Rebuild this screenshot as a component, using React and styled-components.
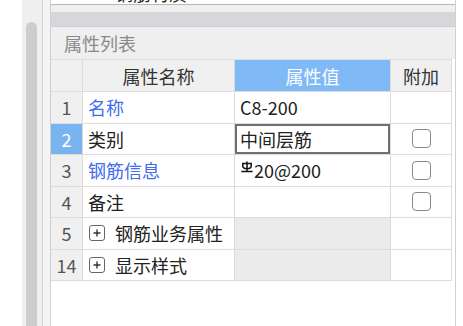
import React from "react";
import styled, { createGlobalStyle } from "styled-components";

const GlobalStyle = createGlobalStyle`
  html, body {
    margin: 0;
    padding: 0;
    background: #ffffff;
  }
  body {
    font-family: "Noto Sans CJK SC", "Noto Sans", sans-serif;
    color: #222;
  }
`;

const Page = styled.div`
  display: flex;
  width: 463px;
  height: 326px;
  overflow: hidden;
  background: #fff;
`;

const LeftBlank = styled.div`
  width: 22px;
  background: #fff;
`;

const ScrollTrack = styled.div`
  width: 21px;
  box-sizing: border-box;
  background: #efefef;
  border-right: 1px solid #d2d2d2;
  padding: 22px 0 0 4px;
  display: flex;
`;

const ScrollThumb = styled.div`
  width: 11px;
  flex: none;
  background: #cdcdcd;
  border-radius: 6px 6px 0 0;
`;

const Gutter = styled.div`
  width: 7px;
  background: #f4f4f4;
`;

const Panel = styled.div`
  width: 406px;
  box-sizing: border-box;
  border-left: 1px solid #d0d0d0;
  border-right: 1px solid #d0d0d0;
  display: flex;
  flex-direction: column;
  background: #fff;
`;

const TopBox = styled.div`
  height: 4px;
  overflow: hidden;
  background: #fff;
  border-bottom: 1px solid #b8b8b8;
  padding-left: 64px;
  font-size: 18px;
  line-height: 18px;
  color: #2a2a2a;
`;

const TopText = styled.div`
  margin-top: -16px;
`;

const Spacer = styled.div`
  height: 7px;
  background: #efefef;
`;

const GrayBar = styled.div`
  height: 14px;
  background: #d6d7da;
  border-bottom: 1px solid #cfcfcf;
`;

const SectionTitle = styled.div`
  height: 32px;
  display: flex;
  align-items: center;
  padding-left: 13px;
  background: #efefef;
  color: #8a8a8a;
  font-size: 18px;
`;

const TableArea = styled.div`
  flex: 1;
  background: #fff;
`;

const Grid = styled.div`
  display: grid;
  grid-template-columns: 32px 152px 156px 61px;
  grid-template-rows: 32px repeat(6, 31.5px);
  width: 401px;
  border-top: 1px solid #dcdcdc;
`;

const Cell = styled.div`
  box-sizing: border-box;
  border-right: 1px solid #dcdcdc;
  border-bottom: 1px solid #dcdcdc;
  display: flex;
  align-items: center;
  font-size: 18px;
  white-space: nowrap;
  overflow: hidden;
  background: ${(p) => p.$bg || "#fff"};
  color: ${(p) => p.$color || "#222"};
  justify-content: ${(p) => (p.$center ? "center" : "flex-start")};
  padding-left: ${(p) => (p.$center ? "0" : "5px")};
  box-shadow: ${(p) => (p.$editing ? "inset 0 0 0 2px #707070" : "none")};
`;

const HeadCell = styled(Cell)`
  justify-content: center;
  padding-left: 0;
`;

const NumCell = styled(Cell)`
  justify-content: center;
  padding-left: 0;
  color: ${(p) => (p.$active ? "#fff" : "#555")};
  background: ${(p) => (p.$active ? "#7ab4f0" : "#f0f0f0")};
`;

const CheckBox = styled.div`
  width: 17px;
  height: 17px;
  border: 1.5px solid #8a8a8a;
  border-radius: 4px;
  background: #fff;
`;

const PlusBox = styled.div`
  width: 14px;
  height: 14px;
  border: 1.5px solid #666;
  border-radius: 3px;
  display: flex;
  align-items: center;
  justify-content: center;
  margin-right: 10px;
  margin-left: 1px;
  flex: none;
`;

const RebarSign = styled.svg`
  width: 12px;
  height: 12px;
  margin: -7px 1px 0 1px;
  flex: none;
`;

const blue = "#3f6cf0";

const rows = [
  { n: "1", name: "名称", nameColor: blue, value: "C8-200", check: false },
  { n: "2", name: "类别", value: "中间层筋", check: true, active: true, editing: true },
  { n: "3", name: "钢筋信息", nameColor: blue, value: "20@200", rebar: true, check: true },
  { n: "4", name: "备注", value: "", check: true },
  { n: "5", name: "钢筋业务属性", group: true },
  { n: "14", name: "显示样式", group: true },
];

const Plus = () => (
  <PlusBox>
    <svg width="10" height="10" viewBox="0 0 10 10">
      <path d="M5 1.5V8.5M1.5 5H8.5" stroke="#333" strokeWidth="1.4" />
    </svg>
  </PlusBox>
);

const App = () => {
  return (
    <>
      <GlobalStyle />
      <Page>
        <LeftBlank />
        <ScrollTrack>
          <ScrollThumb />
        </ScrollTrack>
        <Gutter />
        <Panel>
          <TopBox>
            <TopText>钢筋材质</TopText>
          </TopBox>
          <Spacer />
          <GrayBar />
          <SectionTitle>属性列表</SectionTitle>
          <TableArea>
            <Grid>
              <HeadCell $bg="#f0f0f0" />
              <HeadCell $bg="#f0f0f0" $color="#333">属性名称</HeadCell>
              <HeadCell $bg="#7fbaf7" $color="#fff">属性值</HeadCell>
              <HeadCell $bg="#f0f0f0" $color="#333">附加</HeadCell>
              {rows.map((r) => (
                <React.Fragment key={r.n}>
                  <NumCell $active={r.active}>{r.n}</NumCell>
                  <Cell $color={r.nameColor}>
                    {r.group && <Plus />}
                    {r.name}
                  </Cell>
                  <Cell $bg={r.group ? "#ebebeb" : "#fff"} $editing={r.editing}>
                    {r.rebar && (
                      <RebarSign viewBox="0 0 12 12">
                        <path
                          d="M6 0.5V10M1.8 2.4H10.2V5Q10.2 7.6 6 7.6Q1.8 7.6 1.8 5Z M0.4 10.6H11.6"
                          stroke="#111"
                          strokeWidth="1.5"
                          fill="none"
                        />
                      </RebarSign>
                    )}
                    {r.value}
                  </Cell>
                  <Cell $center>{r.check && <CheckBox />}</Cell>
                </React.Fragment>
              ))}
            </Grid>
          </TableArea>
        </Panel>
      </Page>
    </>
  );
};

export default App;
